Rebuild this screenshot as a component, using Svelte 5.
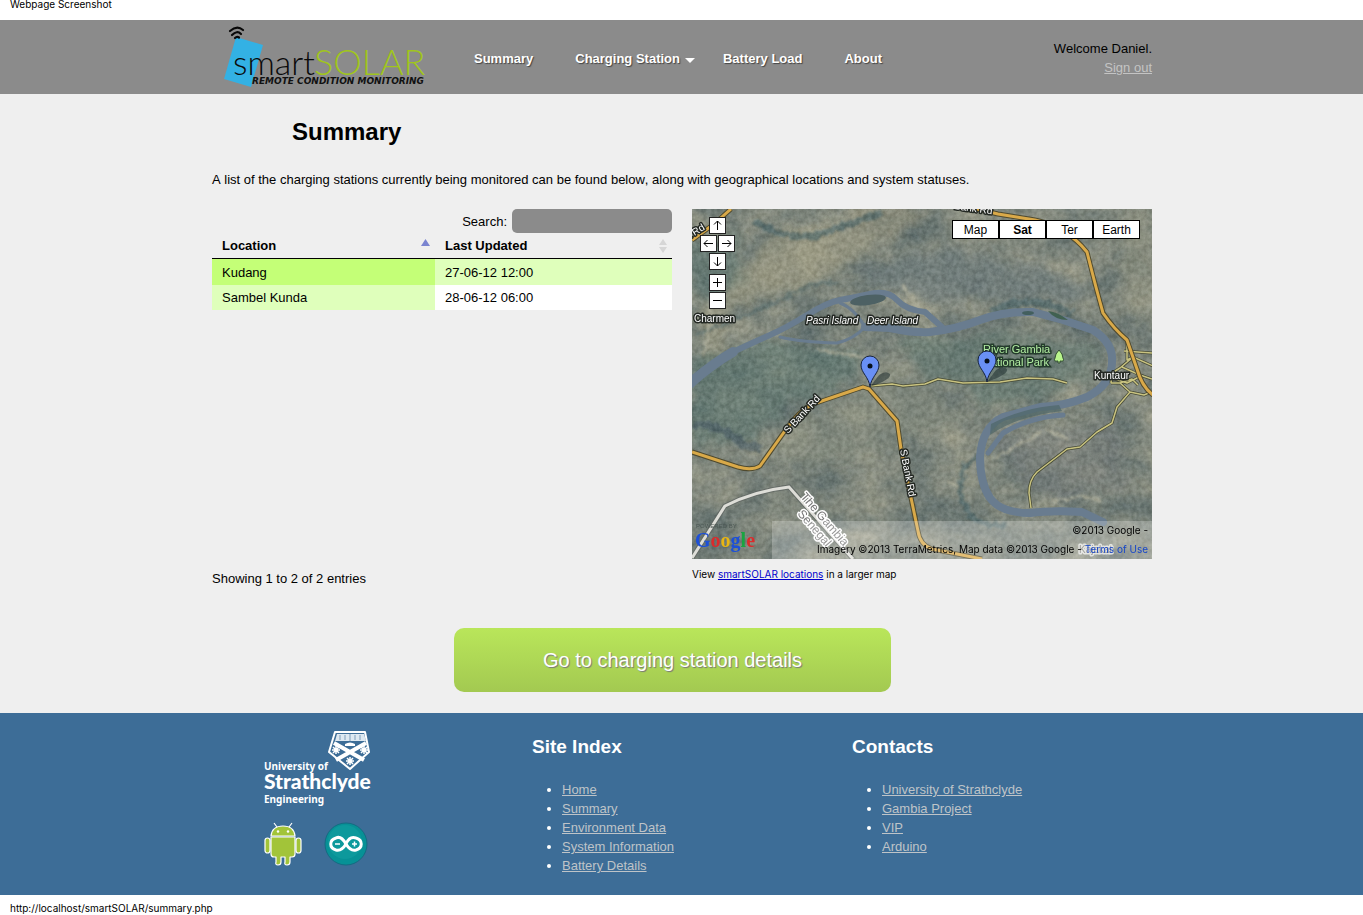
<script>
  const stations = [
    { name: 'Kudang', updated: '27-06-12 12:00' },
    { name: 'Sambel Kunda', updated: '28-06-12 06:00' }
  ];
  let query = $state('');
  const shown = $derived(stations.filter((s) => s.name.toLowerCase().includes(query.toLowerCase())));
  let layer = $state('Sat');
  const layers = ['Map', 'Sat', 'Ter', 'Earth'];
  const controls = [
    { id: 'up', label: 'Pan up', d: 'M7.500 12V3M4 6.500L7.500 3L11 6.500' },
    { id: 'left', label: 'Pan left', d: 'M12 7.500H3M6.500 4L3 7.500L6.500 11' },
    { id: 'right', label: 'Pan right', d: 'M3 7.500H12M8.500 4L12 7.500L8.500 11' },
    { id: 'down', label: 'Pan down', d: 'M7.500 3V12M4 8.500L7.500 12L11 8.500' },
    { id: 'in', label: 'Zoom in', d: 'M3 7.500H12M7.500 3V12' },
    { id: 'out', label: 'Zoom out', d: 'M3 7.500H12' }
  ];
  const track = 'M178 177L200 175L211 177L233 175L246 170L271 174L308 173L335 169L361 170L375 174';
  const minor = 'M339 299L337 284Q337 271 345 263L375 240L388 238L405 223L420 214L425 198L438 183L428 174L419 174M419 174L420 164L428 159L441 148L461 157M435 131L435 151L441 148M432 142L460 144M438 183L452 186L459 183M428 174L440 170L446 176M430 158L448 166L460 170M420 169L435 174L447 168';
  const siteLinks = ['Home', 'Summary', 'Environment Data', 'System Information', 'Battery Details'];
  const contacts = ['University of Strathclyde', 'Gambia Project', 'VIP', 'Arduino'];
</script>

<div class="strip top">Webpage Screenshot</div>

<header>
  <div class="wrap bar">
    <a href="#home" class="logo" aria-label="smartSOLAR">
      <svg width="216" height="66" viewBox="0 0 216 66">
        <path d="M24 13L51 21L39 63L12 55Z" fill="#33b1e4" />
        <g fill="none" stroke="#080808" stroke-width="2.200" stroke-linecap="round">
          <path d="M18 7Q25 1 31 6" /><path d="M20 11Q25 6 29 10" /><path d="M23 14Q25 12 27 13.500" />
        </g>
        <text x="21" y="51" class="smart">smart</text>
        <text x="102" y="51" class="solar">SOLAR</text>
        <text x="40" y="60" class="tag">REMOTE CONDITION MONITORING</text>
      </svg>
    </a>
    <nav>
      <a href="#summary">Summary</a>
      <a href="#station" class="drop">Charging Station<span class="caret"></span></a>
      <a href="#load">Battery Load</a>
      <a href="#about">About</a>
    </nav>
    <div class="user">Welcome Daniel.<br /><a href="#signout">Sign out</a></div>
  </div>
</header>

<main>
  <div class="wrap">
    <h1>Summary</h1>
    <p class="intro">A list of the charging stations currently being monitored can be found below, along with geographical locations and system statuses.</p>
    <div class="columns">
      <section class="list">
        <div class="search"><label for="q">Search:</label><input id="q" type="text" bind:value={query} /></div>
        <table>
          <thead>
            <tr>
              <th><div class="head">Location<svg class="asc" width="9" height="7" viewBox="0 0 9 7"><path d="M0 7L4.500 0L9 7Z" fill="#7a84d0" /></svg></div></th>
              <th><div class="head">Last Updated<svg width="8" height="14" viewBox="0 0 8 14"><path d="M0 6L4 0L8 6ZM0 8L4 14L8 8Z" fill="#d6d6d6" /></svg></div></th>
            </tr>
          </thead>
          <tbody>
            {#each shown as s}
              <tr><td>{s.name}</td><td>{s.updated}</td></tr>
            {/each}
          </tbody>
        </table>
        <p class="count">Showing 1 to 2 of 2 entries</p>
      </section>

      <section class="place">
        <div class="map">
          <svg class="land" viewBox="0 0 460 350" preserveAspectRatio="xMidYMid slice">
            <defs>
              <filter id="terrain" x="0" y="0" width="100%" height="100%" color-interpolation-filters="sRGB">
                <feTurbulence type="fractalNoise" baseFrequency="0.020 0.028" numOctaves="6" seed="12" />
                <feColorMatrix values="0.360 0 0 0 0.310  0.280 0 0 0 0.380  0.180 0 0 0 0.390  0 0 0 0 1" />
              </filter>
              <filter id="grain" x="0" y="0" width="100%" height="100%" color-interpolation-filters="sRGB">
                <feTurbulence type="fractalNoise" baseFrequency="0.200" numOctaves="3" seed="4" />
                <feColorMatrix values="2 0 0 0 -0.450  2 0 0 0 -0.430  2 0 0 0 -0.450  0 0 0 0 0.100" />
              </filter>
              <filter id="soft" x="-30%" y="-30%" width="160%" height="160%" color-interpolation-filters="sRGB">
                <feTurbulence type="fractalNoise" baseFrequency="0.060" numOctaves="3" seed="3" result="n" />
                <feDisplacementMap in="SourceGraphic" in2="n" scale="30" xChannelSelector="R" yChannelSelector="G" />
                <feGaussianBlur stdDeviation="4" />
              </filter>
              <filter id="rough" x="-10%" y="-30%" width="120%" height="160%" color-interpolation-filters="sRGB">
                <feTurbulence type="fractalNoise" baseFrequency="0.150" numOctaves="3" seed="8" result="n" />
                <feDisplacementMap in="SourceGraphic" in2="n" scale="9" xChannelSelector="R" yChannelSelector="G" />
                <feGaussianBlur stdDeviation="1" />
              </filter>
            </defs>
            <rect width="460" height="350" filter="url(#terrain)" />
            <g filter="url(#soft)">
              <path d="M80 20L190 25L150 60L110 80L60 90L30 110L35 150L10 155L15 100L40 70Z" fill="#a09c83" opacity=".65" />
              <path d="M150 -10L240 0L210 30L160 20Z" fill="#98957d" opacity=".6" />
              <path d="M0 35L45 25L50 70L10 95L0 80Z" fill="#56716c" opacity=".6" />
              <path d="M0 150L80 130L170 150L150 180L90 200L60 235L0 230Z" fill="#56736d" opacity=".6" />
              <path d="M160 60L250 40L350 60L400 90L300 90L230 90L180 75Z" fill="#68767a" opacity=".6" />
              <path d="M210 130L330 125L400 140L400 170L310 200L230 165Z" fill="#58726b" opacity=".55" />
              <path d="M300 230L420 210L440 280L350 290Z" fill="#717777" opacity=".5" />
              <path d="M190 150L160 180L60 240L110 260L200 240L280 210L240 180Z" fill="#8a8f7f" opacity=".5" />
              <path d="M430 0L460 0L460 120L430 90Z" fill="#939581" opacity=".6" />
            </g>
            <g filter="url(#rough)" fill="none" stroke="#3e5c62" opacity=".6">
              <path d="M62 12Q85 28 120 28Q145 20 190 3" stroke-width="6" />
              <path d="M0 215Q30 215 50 235L70 240" stroke-width="8" stroke="#40545f" />
              <path d="M5 125Q60 105 100 85Q130 70 145 75" stroke-width="4" opacity=".7" />
              <path d="M300 102Q340 83 380 105" stroke-width="8" />
              <path d="M285 248C264 255 264 290 278 306Q295 320 315 315" stroke-width="5" />
            </g>
            <g filter="url(#rough)" fill="none" stroke="#b4b39e" opacity=".75" stroke-width="3">
              <path d="M207 75L217 83L224 95" /><path d="M125 140L170 148" />
              <path d="M20 100L13 146" /><path d="M298 251L325 236L348 224M353 221L378 230" />
              <path d="M254 272L268 279M360 292L390 287L409 292" />
            </g>
            <rect width="460" height="350" filter="url(#grain)" />
            <g fill="none" stroke="#697c8f" stroke-linecap="round" stroke-linejoin="round">
              <path d="M-2 173Q20 153 41 143T78 126T115 106T148 91T178 85T205 91T233 103L250 118" stroke-width="6" />
              <path d="M-4 176Q20 155 41 143" stroke-width="10" />
              <path d="M88 128Q108 133 145 134Q162 130 173 118M148 94Q162 99 173 118" stroke-width="3" />
              <path d="M173 118L198 119Q220 124 238 123Q265 120 288 111T341 103L371 111L401 121Q422 134 420 154Q419 176 395 188Q373 197 348 198L311 208Q290 218 288 248" stroke-width="8" />
              <path d="M371 206Q338 208 311 224L296 244" stroke-width="5" />
              <path d="M288 248Q288 274 298 289Q309 304 338 304Q360 301 390 303L411 313" stroke-width="8" />
            </g>
            <ellipse cx="336" cy="104" rx="6" ry="2" fill="#435f5e" />
            <ellipse cx="176" cy="91" rx="18" ry="5" fill="#4d6164" transform="rotate(-8 176 91)" />
            <path d="M356 102Q366 103 376 111Q363 111 356 102Z" fill="#416151" />
            <path d="M299 215Q330 199 367 196L370 202Q325 207 298 226Z" fill="#4e6768" opacity=".7" />

            <g fill="none" stroke="#454936" stroke-width="3" stroke-linejoin="round"><path d={track} /><path d={minor} /></g>
            <g fill="none" stroke="#c9c380" stroke-width="1.500" stroke-linejoin="round"><path d={track} /><path d={minor} /></g>
            {#each [['#4f4a2f', 5], ['#d9a949', 3]] as [color, width]}
              <g fill="none" stroke={color} stroke-width={width} stroke-linejoin="round">
                <path d="M0 243L46 258Q60 262 68 257L95 219Q107 202 121 195L171 178L177 180L205 212L209 240L218 284L226 322Q228 336 240 340L290 350" />
                <path d="M0 31L22 15L39 0M285 0L306 5L343 11Q375 18 395 43Q404 79 411 104Q422 120 435 131L445 160Q450 178 461 186" />
              </g>
            {/each}
            <path d="M0 349L33 297Q62 282 97 278L161 350" fill="none" stroke="#5f6562" stroke-width="5" opacity=".8" />
            <path d="M0 349L33 297Q62 282 97 278L161 350" fill="none" stroke="#deded8" stroke-width="3" />

            <g class="road">
              <text transform="translate(-4 31) rotate(-32)">k Rd</text>
              <text transform="translate(262 0) rotate(8)">Bank Rd</text>
              <text transform="translate(96 225) rotate(-47)">S Bank Rd</text>
              <text transform="translate(208 241) rotate(79)">S Bank Rd</text>
            </g>
            <g class="town">
              <text x="2" y="113">Charmen</text><text x="402" y="170">Kuntaur</text>
              <g font-style="italic"><text x="114" y="115">Pasri Island</text><text x="175" y="115">Deer Island</text></g>
            </g>
            <g class="park"><text x="291" y="144">River Gambia</text><text x="291" y="157">National Park</text></g>
            <g class="border"><text transform="translate(108 288) rotate(49)">The Gambia</text><text transform="translate(105 305) rotate(49)">Senegal</text></g>
            <path d="M367 141Q363 145 363 149Q361 153 366 152V154H368V152Q373 153 371 149Q371 145 367 141Z" fill="#b9f58c" stroke="#314b32" />
            <g class="border small"><text x="387" y="344">Kajakat</text></g>
            <path d="M80 312H460V350H80Z" fill="#fff" opacity=".24" />
            {#each [[178, 178], [295, 173]] as [x, y]}
              <g transform="translate({x} {y})">
                <path d="M0 0L9 -12Q16 -17 20 -13Q22 -8 0 0Z" fill="#152528" opacity=".5" />
                <path d="M0 0C-1 -10 -9 -14 -9 -22A9 9 0 0 1 9 -22C9 -14 1 -10 0 0Z" fill="#6990f5" stroke="#17233e" />
                <circle cy="-21" r="2.500" fill="#07101c" />
              </g>
            {/each}
            <text x="4" y="319" class="powered">POWERED BY</text>
            <text x="3" y="338" class="google"><tspan fill="#1d50d8">G</tspan><tspan fill="#dc2b2c">o</tspan><tspan fill="#e9b513">o</tspan><tspan fill="#1d50d8">g</tspan><tspan fill="#19a541">l</tspan><tspan fill="#dc2b2c">e</tspan></text>
          </svg>
          <div class="pan">
            {#each controls as c}
              <button class={c.id} aria-label={c.label}><svg width="15" height="15" viewBox="0 0 15 15"><path d={c.d} /></svg></button>
            {/each}
          </div>
          <div class="layers">
            {#each layers as l}
              <button class:on={layer === l} onclick={() => (layer = l)}>{l}</button>
            {/each}
          </div>
          <div class="credit">©2013 Google -<br />Imagery ©2013 TerraMetrics, Map data ©2013 Google - <a href="#terms">Terms of Use</a></div>
        </div>
        <p class="larger">View <a href="#map">smartSOLAR locations</a> in a larger map</p>
      </section>
    </div>
    <div class="action"><a class="cta" href="#details">Go to charging station details</a></div>
  </div>
</main>

<footer>
  <div class="wrap cols">
    <div class="brands">
      <svg width="112" height="80" viewBox="0 0 112 80" role="img" aria-label="University of Strathclyde Engineering">
        <path d="M71 3H101L105 23L86 40L65 23Z" fill="#3d6d97" stroke="#fff" stroke-width="2" stroke-linejoin="round" />
        <path d="M73 5H100L102 12H71Z" fill="#dfe9f1" />
        <path d="M76 6V11M81 6V11M86 5V12M91 6V11M96 6V11" stroke="#7f9fbb" />
        <path d="M70 14L100 31M102 14L72 31" stroke="#fff" stroke-width="4" />
        <g stroke="#fff" stroke-width="1.500">
          <path d="M68 21H76M72 17V25M69 18L75 24M75 18L69 24" />
          <path d="M96 21H104M100 17V25M97 18L103 24M103 18L97 24" />
          <path d="M82 32H90M86 28V36M83 29L89 35M89 29L83 35" />
        </g>
        <path d="M81 15Q86 12 91 15V17H81Z" fill="#fff" />
        <text x="0" y="41" class="uni">University of</text>
        <text x="0" y="60" class="strath">Strathclyde</text>
        <text x="0" y="74" class="uni">Engineering</text>
      </svg>
      <div class="badges">
        <svg width="38" height="44" viewBox="0 0 38 44" role="img" aria-label="Android">
          <g fill="#a2c439" stroke="#fff" stroke-width="1.200" stroke-linejoin="round">
            <path d="M13 5L10 1M25 5L28 1" fill="none" />
            <rect x="1" y="16" width="5" height="15" rx="2.500" /><rect x="32" y="16" width="5" height="15" rx="2.500" />
            <path d="M7 15H31V32Q31 35 28 35H26V40Q26 43 23 43T21 40V35H17V40Q17 43 14 43T12 40V35H10Q7 35 7 32Z" />
            <path d="M7 14Q8 4 19 4T31 14Z" />
          </g>
          <circle cx="14" cy="9.500" r="1.200" fill="#fff" /><circle cx="24" cy="9.500" r="1.200" fill="#fff" />
        </svg>
        <svg width="44" height="44" viewBox="0 0 44 44" role="img" aria-label="Arduino">
          <circle cx="22" cy="22" r="21" fill="#079196" stroke="#146c82" />
          <circle cx="21" cy="20" r="17" fill="#17a4a6" opacity=".4" />
          <path d="M22 22C18 15 14 15 12 16C5 18 5 26 12 28C16 29 19 27 22 22C25 15 29 15 32 16C39 18 39 26 32 28C28 29 25 27 22 22Z" fill="none" stroke="#fff" stroke-width="3" />
          <path d="M11 22H16M28 22H33M30.500 19.500V24.500" stroke="#fff" stroke-width="1.500" />
        </svg>
      </div>
    </div>
    <div class="links">
      <h2>Site Index</h2>
      <ul>{#each siteLinks as t}<li><a href="#site">{t}</a></li>{/each}</ul>
    </div>
    <div class="links">
      <h2>Contacts</h2>
      <ul>{#each contacts as t}<li><a href="#contact">{t}</a></li>{/each}</ul>
    </div>
  </div>
</footer>
<div class="strip bottom">http://localhost/smartSOLAR/summary.php</div>

<style>
  :global(body) { background: #fff; color: #000; font: 13px/19px "Liberation Sans", Arial, sans-serif; font-kerning: none; }
  .wrap { box-sizing: border-box; max-width: 941px; margin: 0 auto; padding-left: 1px; }
  .strip { padding: 0 10px; font: 10px/12px Inter, Arial, sans-serif; }
  .top { height: 10px; padding-bottom: 12px; margin-top: -2px; }
  .bottom { padding-top: 7px; }
  header { background: #8b8b8b; }
  .bar { display: flex; height: 74px; }
  .logo { width: 232px; flex: none; }
  .logo svg { display: block; padding-top: 4px; }
  .smart { font: 300 34px Lato, sans-serif; fill: #0a0a0a; }
  .solar { font: 300 36px Lato, sans-serif; fill: #a0c51d; }
  .tag { font: italic bold 9px "DejaVu Sans", sans-serif; fill: #111; }
  nav { display: flex; align-items: center; gap: 42px; padding: 3px 0 0 30px; }
  nav a { color: #fff; font-weight: bold; text-decoration: none; text-shadow: 1px 1px 1px #444; white-space: nowrap; }
  .drop { display: flex; align-items: center; gap: 5px; margin-right: -14px; }
  .caret { border: 5px solid transparent; border-top-color: #fff; border-bottom: 0; margin-top: 4px; }
  .user { margin-left: auto; padding-top: 19px; text-align: right; }
  .user a { color: #c4c4c4; }
  main { background: #efefef; padding: 21px 0; }
  h1 { margin: 0 0 21px; padding-left: 80px; font-size: 24px; line-height: 33px; }
  p { margin: 0; }
  .intro { line-height: 22px; margin-bottom: 18px; }
  .columns { display: grid; grid-template-columns: 1fr 1fr; gap: 20px; min-height: 379px; }
  .list { display: flex; flex-direction: column; }
  .search { display: flex; justify-content: flex-end; align-items: center; gap: 5px; }
  input { box-sizing: border-box; width: 160px; height: 24px; border: 0; border-radius: 5px; background: #8b8b8b; color: #fff; padding: 0 6px; }
  table { width: 100%; border-collapse: collapse; table-layout: fixed; }
  th { height: 25px; padding: 0 5px 0 10px; text-align: left; border-bottom: 1px solid #000; }
  th:first-child { width: 208px; }
  .head { display: flex; justify-content: space-between; align-items: center; }
  .asc { margin-bottom: 6px; }
  td { padding: 3px 10px; background: #fff; }
  tr:nth-child(odd) td { background: #dfffbb; padding-top: 4px; }
  tr:nth-child(odd) td:first-child { background: #c4ff77; }
  tr:nth-child(even) td:first-child { background: #dfffbb; }
  .count { margin-top: auto; }
  .map { position: relative; height: 350px; overflow: hidden; }
  .land { display: block; width: 100%; height: 100%; font-family: "Liberation Sans", Arial, sans-serif; }
  .town, .road { font-size: 10px; fill: #fff; stroke: #242924; stroke-width: 3px; paint-order: stroke; stroke-linejoin: round; }
  .park { font-size: 11px; fill: #b2eda2; stroke: #243b2c; stroke-width: 3px; paint-order: stroke; }
  .border { font-size: 12px; fill: #777; stroke: #fff; stroke-width: 3px; paint-order: stroke; stroke-linejoin: round; }
  .small { font-size: 10px; opacity: 0.7; }
  .powered { font-size: 6px; fill: #4c5854; }
  .google { font: bold 20px "Liberation Serif", serif; }
  .pan { position: absolute; left: 9px; top: 9px; display: grid; grid-template: 18px 18px 21px 18px 18px / 9px 9px 9px 9px; }
  .pan button { width: 15px; height: 15px; padding: 0; border: 0; background: #fff; outline: 1px solid #222; }
  .pan svg { display: block; fill: none; stroke: #000; }
  .up { grid-area: 1 / 2 / 2 / 4; }
  .left { grid-area: 2 / 1 / 3 / 3; }
  .right { grid-area: 2 / 3 / 3 / 5; }
  .down { grid-area: 3 / 2 / 4 / 4; }
  .in { grid-area: 4 / 2 / 5 / 4; }
  .out { grid-area: 5 / 2 / 6 / 4; }
  .layers { position: absolute; right: 12px; top: 11px; display: flex; }
  .layers button { width: 47px; height: 19px; padding: 0; border: 1px solid #000; background: #fff; color: #000; font: 12px "Liberation Sans", Arial, sans-serif; }
  .layers .on { font-weight: bold; }
  .credit { position: absolute; right: 4px; bottom: 0; text-align: right; font: 10px/19px Inter, Arial, sans-serif; }
  .credit a { color: #1746c8; text-decoration: none; }
  .larger { font: 10px/20px Inter, Arial, sans-serif; margin-top: 5px; }
  .larger a { color: #0000cc; }
  .action { display: flex; justify-content: center; padding: 40px 19px 0 0; }
  .cta { width: 437px; line-height: 64px; border-radius: 10px; background: linear-gradient(#b9e65a, #a3c951); color: #fff; font-size: 20px; text-align: center; text-decoration: none; text-shadow: 1px 1px 1px #777; }
  footer { background: #3d6d97; color: #fff; }
  .cols { display: grid; grid-template-columns: 320px 320px 1fr; min-height: 182px; }
  .brands { padding: 16px 0 0 52px; }
  .brands svg { display: block; }
  .uni { font: bold 10px "Noto Sans", sans-serif; fill: #fff; }
  .strath { font: 900 21px Lato, sans-serif; fill: #fff; }
  .badges { display: flex; gap: 22px; margin-top: 13px; }
  h2 { margin: 20px 0; font-size: 19px; line-height: 27px; }
  ul { margin: 0; padding-left: 30px; }
  li a { color: #bfc4c8; }
</style>
